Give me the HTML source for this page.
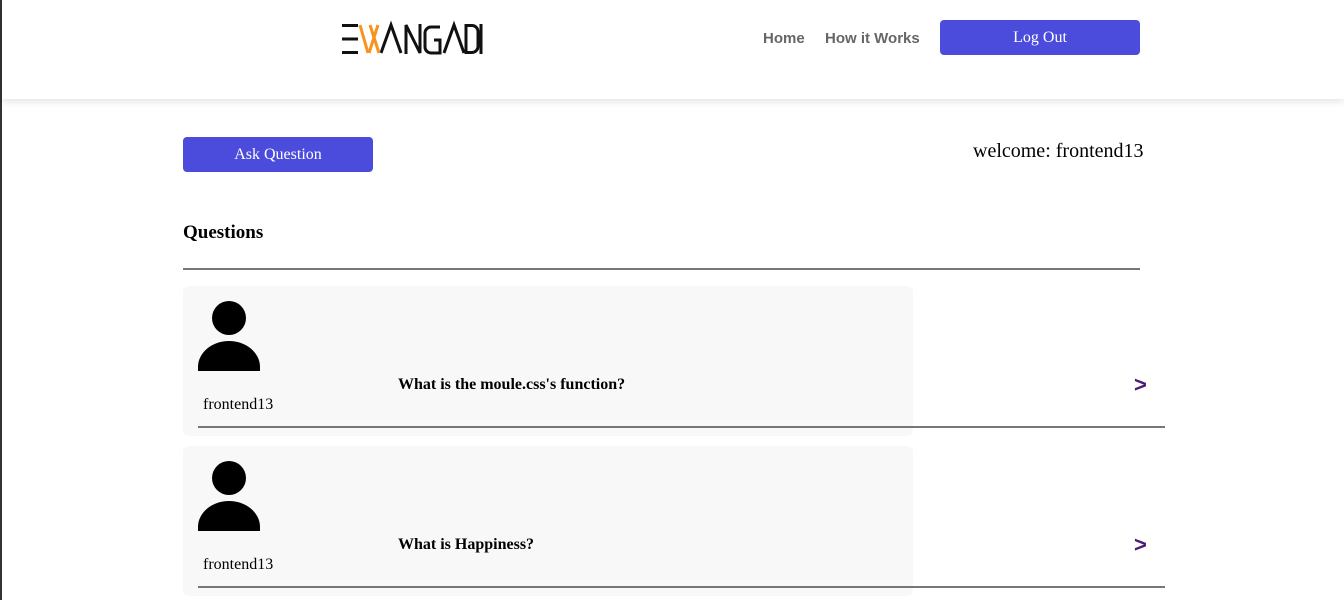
<!DOCTYPE html>
<html><head><style>
body{margin:0;width:1344px;height:600px;overflow:hidden;background:#fff;font-family:"Liberation Serif",serif;position:relative}
.edge{position:absolute;left:0;top:0;width:2px;height:600px;background:#333}
header{position:absolute;left:2px;top:0;width:1342px;height:99px;background:#fff;box-shadow:0 2px 8px rgba(0,0,0,.12)}
.nav{position:absolute;top:30px;font-family:"Liberation Sans",sans-serif;font-weight:bold;font-size:15px;color:#666}
.btn{position:absolute;background:#4b4bdc;color:#fff;border-radius:4px;text-align:center;font-size:16px}
.card{position:absolute;left:183px;width:730px;height:150px;background:#f8f8f8;border-radius:6px}
.line{position:absolute;left:198px;width:967px;height:2px;background:#777}
.name{position:absolute;left:203px;font-size:16px}
.q{position:absolute;left:398px;font-weight:bold;font-size:16px}
.arr{position:absolute;left:1134px;font-size:22px;font-weight:bold;color:#4a1a7a;font-family:"Liberation Sans",sans-serif}
</style></head><body>
<div class="edge"></div>
<header>
<svg style="position:absolute;left:336px;top:20px" width="150" height="40" viewBox="338 20 150 40">
<g stroke="#111" stroke-width="3" fill="none">
<path d="M342 25.5h16M342 39h16M342 52.5h16"/>
<path d="M381 53L391 25L401 53"/>
<path d="M406 54V25L420 53V24"/>
<path d="M440 27h-9a6 6 0 0 0-6 6v14a6 6 0 0 0 6 6h9V40h-6"/>
<path d="M444 53L454 25L464 53"/>
<path d="M466 25.5v27h6a6 6 0 0 0 6-6v-15a6 6 0 0 0-6-6z"/>
<path d="M481 24v30"/>
</g>
<path d="M360 25L368 53M369 53L378 25M370 25L379 53" stroke="#f7931e" stroke-width="3" fill="none"/>
</svg>
<div class="nav" style="left:761px">Home</div>
<div class="nav" style="left:823px">How it Works</div>
<div class="btn" style="left:938px;top:20px;width:200px;height:35px;line-height:36px">Log Out</div>
</header>
<div class="btn" style="left:183px;top:137px;width:190px;height:35px;line-height:36px">Ask Question</div>
<div style="position:absolute;left:973px;top:140px;font-size:20px">welcome: frontend13</div>
<div style="position:absolute;left:183px;top:222px;font-size:19px;font-weight:bold">Questions</div>
<div style="position:absolute;left:183px;top:268px;width:957px;height:2px;background:#777"></div>

<div class="card" style="top:286px"></div>
<svg style="position:absolute;left:198px;top:300px" width="62" height="72"><circle cx="31" cy="18" r="17"/><path d="M0 71v-4a31 26 0 0 1 62 0v4z"/></svg>
<div class="name" style="top:396px">frontend13</div>
<div class="q" style="top:376px">What is the moule.css's function?</div>
<div class="arr" style="top:372px">&gt;</div>
<div class="line" style="top:426px"></div>

<div class="card" style="top:446px"></div>
<svg style="position:absolute;left:198px;top:460px" width="62" height="72"><circle cx="31" cy="18" r="17"/><path d="M0 71v-4a31 26 0 0 1 62 0v4z"/></svg>
<div class="name" style="top:556px">frontend13</div>
<div class="q" style="top:536px">What is Happiness?</div>
<div class="arr" style="top:532px">&gt;</div>
<div class="line" style="top:586px"></div>
</body></html>
